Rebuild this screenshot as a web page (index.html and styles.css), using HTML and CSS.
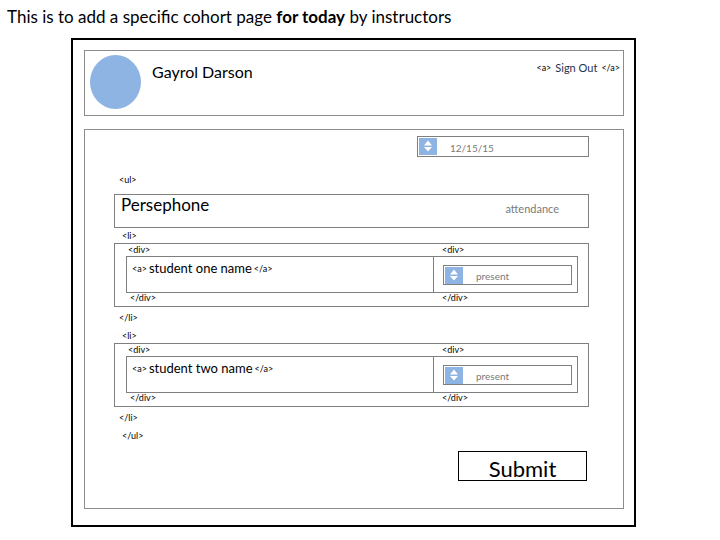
FILE: index.html
```
<!DOCTYPE html>
<html lang="en">
<head>
<meta charset="utf-8">
<title>Cohort attendance</title>
<link rel="stylesheet" href="styles.css">
</head>
<body>
<p class="note">This is to add a specific cohort page <strong>for today</strong> by instructors</p>
<div class="frame">
  <header class="header">
    <span class="avatar"></span>
    <span class="user">Gayrol Darson</span>
    <span class="signout"><span class="tag">&lt;a&gt;</span><a href="#">Sign Out</a><span class="tag">&lt;/a&gt;</span></span>
  </header>
  <main class="main">
    <div class="picker picker-date">
      <select aria-label="Date"><option>12/15/15</option></select>
      <svg class="stepper" viewBox="0 0 18 17" aria-hidden="true"><rect width="18" height="17"/><path d="M9 2.5 13 7.5H5ZM5 9H13L9 13.5Z"/></svg>
    </div>
    <div class="tag tag-list">&lt;ul&gt;</div>
    <div class="cohort">
      <h1>Persephone</h1>
      <span class="column">attendance</span>
    </div>
    <ul class="students">
      <li>
        <div class="tag tag-open">&lt;li&gt;</div>
        <div class="card">
          <div class="cell">
            <div class="tag tag-div">&lt;div&gt;</div>
            <div class="box"><span class="tag">&lt;a&gt;</span><a href="#">student one name</a><span class="tag">&lt;/a&gt;</span></div>
            <div class="tag tag-end">&lt;/div&gt;</div>
          </div>
          <div class="cell cell-status">
            <div class="tag tag-div">&lt;div&gt;</div>
            <div class="box">
              <div class="picker">
                <select aria-label="Attendance of student one"><option>present</option></select>
                <svg class="stepper" viewBox="0 0 18 17" aria-hidden="true"><rect width="18" height="17"/><path d="M9 2.5 13 7.5H5ZM5 9H13L9 13.5Z"/></svg>
              </div>
            </div>
            <div class="tag tag-end">&lt;/div&gt;</div>
          </div>
        </div>
        <div class="tag tag-close">&lt;/li&gt;</div>
      </li>
      <li>
        <div class="tag tag-open">&lt;li&gt;</div>
        <div class="card">
          <div class="cell">
            <div class="tag tag-div">&lt;div&gt;</div>
            <div class="box"><span class="tag">&lt;a&gt;</span><a href="#">student two name</a><span class="tag">&lt;/a&gt;</span></div>
            <div class="tag tag-end">&lt;/div&gt;</div>
          </div>
          <div class="cell cell-status">
            <div class="tag tag-div">&lt;div&gt;</div>
            <div class="box">
              <div class="picker">
                <select aria-label="Attendance of student two"><option>present</option></select>
                <svg class="stepper" viewBox="0 0 18 17" aria-hidden="true"><rect width="18" height="17"/><path d="M9 2.5 13 7.5H5ZM5 9H13L9 13.5Z"/></svg>
              </div>
            </div>
            <div class="tag tag-end">&lt;/div&gt;</div>
          </div>
        </div>
        <div class="tag tag-close">&lt;/li&gt;</div>
      </li>
    </ul>
    <div class="tag tag-open">&lt;/ul&gt;</div>
    <button class="submit" type="submit">Submit</button>
  </main>
</div>
</body>
</html>
```

FILE: styles.css
```
* { box-sizing: border-box; }

body {
  margin: 0;
  padding: 6px 0 12px;
  background: #fff;
  color: #000;
  font-family: Lato, "Liberation Sans", sans-serif;
}

.note {
  margin: 0 0 10px;
  padding-left: 7px;
  font-size: 17px;
  line-height: 22px;
}

.frame {
  margin: 0 84px 0 71px;
  padding: 10px 10px 16px 11px;
  border: 2px solid #000;
}

.header {
  display: flex;
  align-items: flex-start;
  height: 66px;
  margin-bottom: 13px;
  padding: 4px 3px 0 5px;
  border: 1px solid #8c8c8c;
}

.avatar {
  width: 51px;
  height: 54px;
  border-radius: 50%;
  background: #8eb4e3;
}

.user {
  margin: 6px 0 0 11px;
  font-size: 16px;
  line-height: 22px;
}

.signout {
  display: flex;
  align-items: center;
  gap: 4px;
  margin: 6px 0 0 auto;
  font-size: 11px;
  line-height: 14px;
}

.signout a {
  color: #1f3350;
  text-decoration: none;
}

.tag {
  font-size: 9px;
  line-height: 12px;
}

.main {
  display: flex;
  flex-direction: column;
  padding: 6px 34px 27px 29px;
  border: 1px solid #8c8c8c;
}

.picker {
  position: relative;
  height: 20px;
}

.picker-date {
  align-self: flex-end;
  width: 172px;
  height: 21px;
  margin-bottom: 17px;
}

.picker select {
  appearance: none;
  display: block;
  width: 100%;
  height: 100%;
  margin: 0;
  padding: 2px 0 0 32px;
  border: 1px solid #7f7f7f;
  border-radius: 0;
  background: #fff;
  color: #7a7a7a;
  font: 10px/16px Lato, "Liberation Sans", sans-serif;
}

.stepper {
  position: absolute;
  top: 2px;
  left: 2px;
  width: 18px;
  height: 17px;
  pointer-events: none;
}

.stepper rect { fill: #8eb4e3; }
.stepper path { fill: #fff; }

.tag-list { margin: 0 0 8px 5px; }

.cohort {
  display: flex;
  justify-content: space-between;
  height: 34px;
  padding: 0 29px 0 6px;
  border: 1px solid #7f7f7f;
}

.cohort h1 {
  margin: 0;
  font-size: 17px;
  font-weight: 400;
  line-height: 20px;
}

.column {
  color: #7a7a7a;
  font-size: 11px;
  line-height: 28px;
}

.students {
  margin: 2px 0 6px;
  padding: 0;
  list-style: none;
}

.students li + li { margin-top: 6px; }

.tag-open { margin: 0 0 1px 8px; }
.tag-close { margin: 5px 0 0 5px; }
.tag-div { padding-left: 2px; }
.tag-end { padding-left: 4px; line-height: 10px; }

.card {
  display: grid;
  grid-template-columns: 1fr 144px;
  padding: 0 10px 3px 11px;
  border: 1px solid #7f7f7f;
}

.box {
  display: flex;
  align-items: flex-start;
  gap: 2px;
  height: 37px;
  padding: 3px 5px;
  border: 1px solid #7f7f7f;
}

.box a {
  color: #000;
  font-size: 13px;
  line-height: 16px;
  text-decoration: none;
}

.box .tag { line-height: 18px; }

.cell-status { margin-left: -1px; }
.cell-status .tag { padding-left: 9px; }

.cell-status .box {
  align-items: center;
  padding: 0 5px 0 9px;
}

.cell-status .picker { flex: 1; }

.submit {
  align-self: flex-end;
  width: 129px;
  height: 30px;
  margin: 8px 2px 0 0;
  padding: 5px 0 0;
  border: 1px solid #000;
  border-radius: 0;
  background: #fff;
  color: #000;
  font: 22px/24px Lato, "Liberation Sans", sans-serif;
}
```
